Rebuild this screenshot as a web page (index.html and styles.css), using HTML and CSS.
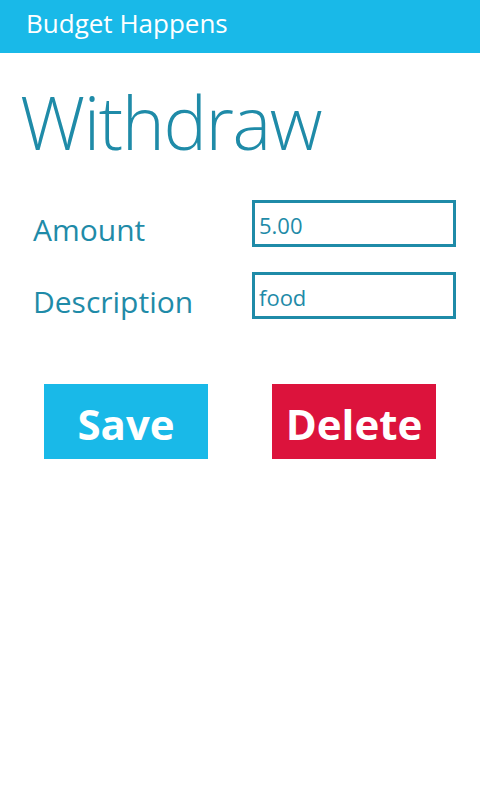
FILE: index.html
```html
<!DOCTYPE html>
<html>
<head>
<meta charset="utf-8">
<link rel="stylesheet" href="styles.css">
</head>
<body>
<header class="bar">Budget Happens</header>
<main class="content">
  <h1 class="title">Withdraw</h1>
  <div class="form">
    <div class="row">
      <label class="label">Amount</label>
      <div class="field">5.00</div>
    </div>
    <div class="row">
      <label class="label">Description</label>
      <div class="field">food</div>
    </div>
  </div>
  <div class="buttons">
    <div class="btn save">Save</div>
    <div class="btn delete">Delete</div>
  </div>
</main>
</body>
</html>
```
FILE: styles.css
```css
html, body { margin: 0; padding: 0; background: #fff; }
body { font-family: "Open Sans", "Noto Sans", sans-serif; width: 480px; height: 800px; }
.bar {
  height: 53px;
  background: #19b9e8;
  color: #fff;
  font-size: 26px;
  line-height: 46px;
  padding-left: 26px;
  box-sizing: border-box;
}
.content { padding: 0; }
.title {
  margin: 24px 0 0 20px;
  font-weight: 300;
  font-size: 73px;
  letter-spacing: -1.4px;
  line-height: 90px;
  color: #1f8ba8;
}
.form { margin-top: 33px; display: flex; flex-direction: column; gap: 25px; }
.row { display: flex; align-items: flex-start; height: 47px; }
.label {
  width: 219px;
  padding-left: 33px;
  font-size: 30px;
  line-height: 60px;
  color: #1f8ba8;
}
.field {
  width: 204px;
  height: 47px;
  box-sizing: border-box;
  border: 3px solid #1f8ba8;
  color: #1f8ba8;
  font-size: 22px;
  line-height: 45px;
  padding-left: 4px;
  overflow: hidden;
}
.buttons { display: flex; gap: 64px; margin: 65px 0 0 44px; }
.btn {
  width: 164px;
  height: 75px;
  color: #fff;
  font-weight: 700;
  font-size: 42px;
  line-height: 80px;
  text-align: center;
}
.save { background: #19b9e8; }
.delete { background: #dc133c; }
```
